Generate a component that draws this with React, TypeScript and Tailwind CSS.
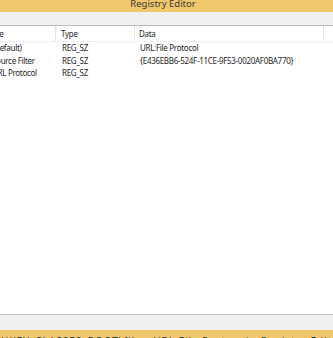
export default function App() {
  const rows = [
    { name: "(Default)", type: "REG_SZ", data: "URL:File Protocol" },
    { name: "Source Filter", type: "REG_SZ", data: "{E436EBB6-524F-11CE-9F53-0020AF0BA770}" },
    { name: "URL Protocol", type: "REG_SZ", data: "" },
  ];

  return (
    <div
      className="w-[333px] h-[338px] overflow-hidden flex flex-col bg-white text-[8px] tracking-[-0.3px] text-[#1e1e1e]"
      style={{ fontFamily: '"Noto Sans", "Open Sans", sans-serif' }}
    >
      {/* title bar */}
      <div className="h-[12px] shrink-0 bg-[#f1c76b] flex items-start justify-center pr-[7px] overflow-hidden">
        <span className="text-[9.5px] tracking-normal leading-none -mt-[1px] text-[#3a3a3a]">Registry Editor</span>
      </div>

      {/* menu strip */}
      <div className="h-[14px] shrink-0 bg-[#f0f0f0] border-b border-[#bdbdbd]" />

      {/* list */}
      <div className="flex-1 flex flex-col overflow-hidden">
        <div className="h-[16px] shrink-0 flex items-stretch border-b border-[#efefef] overflow-hidden">
          <div className="w-[78px] shrink-0 -ml-[22px] pl-[4px] border-r border-[#e5e5e5] flex items-center">Name</div>
          <div className="w-[79px] shrink-0 pl-[5px] border-r border-[#e5e5e5] flex items-center">Type</div>
          <div className="w-[189px] shrink-0 pl-[4px] border-r border-[#e5e5e5] flex items-center">Data</div>
          <div className="flex-1" />
        </div>
        <div>
          {rows.map((r) => (
            <div key={r.name} className="h-[12.5px] flex items-center overflow-hidden whitespace-nowrap">
              <div className="w-[78px] shrink-0 -ml-[22px] pl-[14px]">{r.name}</div>
              <div className="w-[79px] shrink-0 pl-[6px]">{r.type}</div>
              <div className="shrink-0 pl-[5px]">{r.data}</div>
            </div>
          ))}
        </div>
      </div>

      {/* status bar */}
      <div className="h-[16px] shrink-0 bg-[#f0f0f0] border-t border-[#c4c4c4]" />
      <div className="h-[8px] shrink-0 bg-[#f1c76b] overflow-hidden flex items-start pl-[1px]">
        <span className="text-[10px] leading-none mt-[6px] tracking-[1px] text-[#333] whitespace-nowrap">
          HKEY_CLASSES_ROOT\file - URL:File Protocol - Registry Editor - HKEY_LOCAL_MACHINE
        </span>
      </div>
    </div>
  );
}
